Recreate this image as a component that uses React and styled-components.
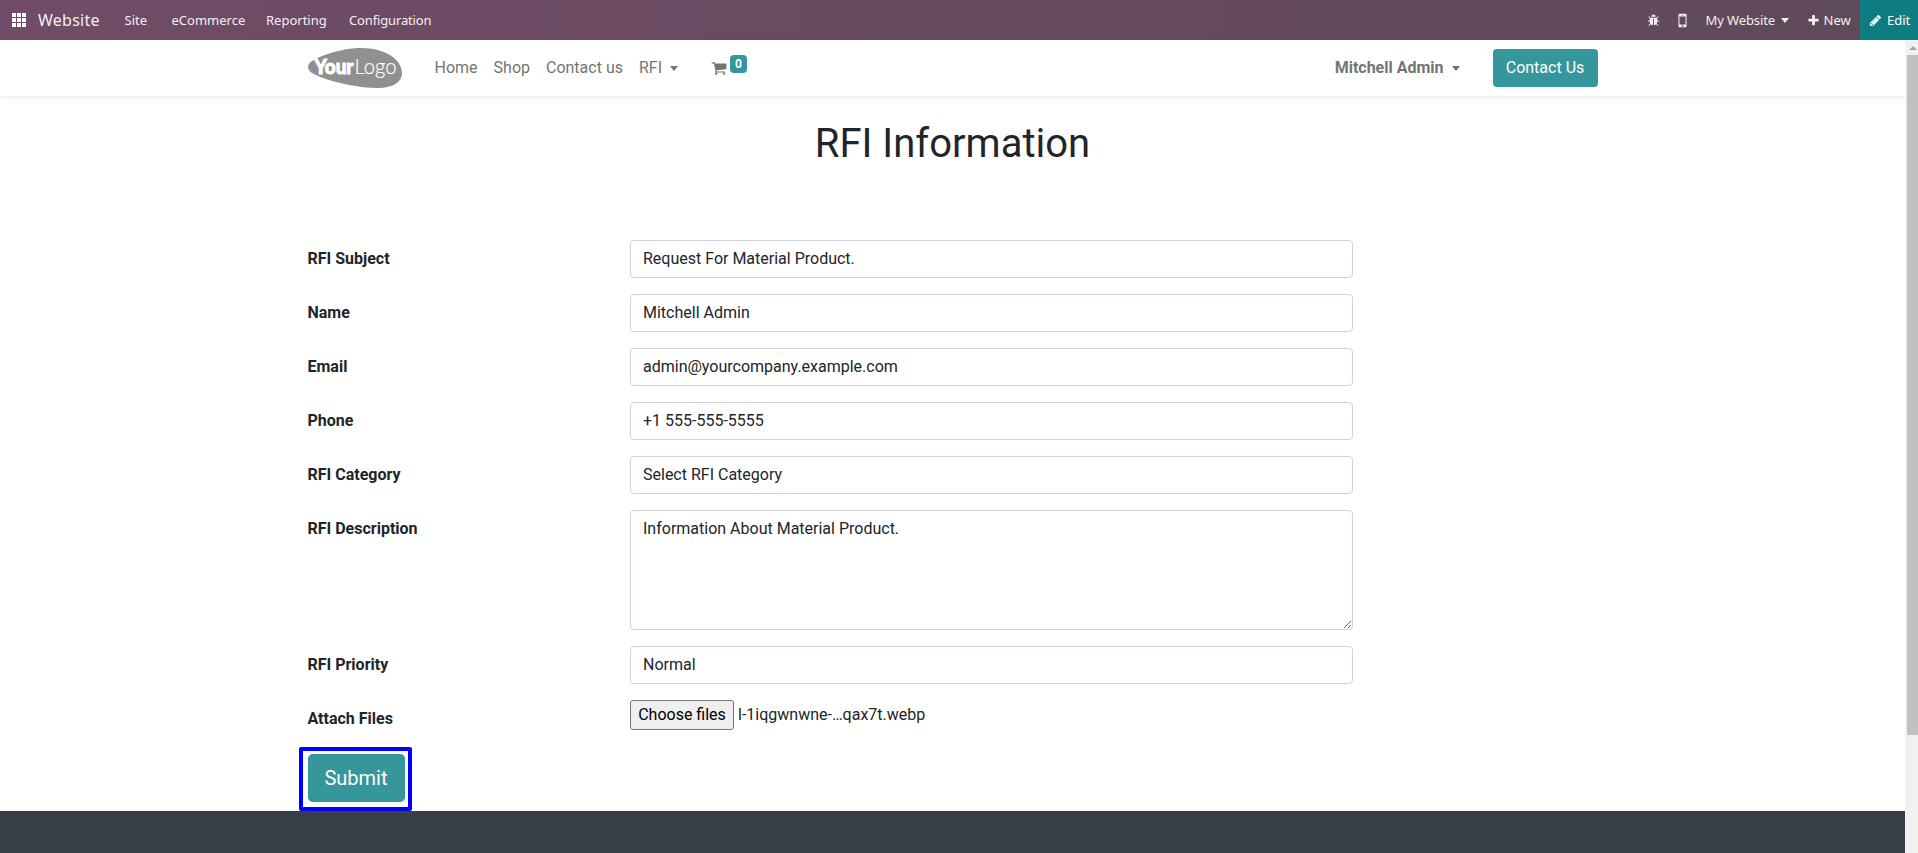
import React from "react";
import styled, { createGlobalStyle } from "styled-components";

const GlobalStyle = createGlobalStyle`
  *, *::before, *::after { box-sizing: border-box; }
  body {
    margin: 0;
    overflow: hidden;
    background: #fff;
    color: #212529;
    font: 400 16px/24px Roboto, "Liberation Sans", sans-serif;
  }
  input, textarea, button { font: inherit; color: inherit; margin: 0; }
`;

const Screen = styled.div`
  display: flex;
  flex-direction: column;
  width: 100%;
  height: 100vh;
  overflow: hidden;
`;

const SystemBar = styled.nav`
  display: flex;
  align-items: center;
  flex: 0 0 40px;
  padding-left: 12px;
  background: linear-gradient(90deg, #714b67 0%, #5f4a59 100%);
  color: #f3eff2;
  font: 400 13px/40px "Noto Sans", "Open Sans", sans-serif;
  white-space: nowrap;
`;

const AppsGrid = styled.span`
  display: grid;
  grid-template-columns: repeat(3, 4px);
  grid-auto-rows: 4px;
  gap: 1px;
  margin-right: 12px;
  i { background: #fff; }
`;

const SystemItem = styled.span`
  width: ${(p) => p.$w}px;
  margin-right: ${(p) => p.$gap ?? 0}px;
  font-size: ${(p) => p.$size ?? 13}px;
  letter-spacing: ${(p) => p.$track ?? 0}px;
`;

const SystemTools = styled.div`
  display: flex;
  align-items: center;
  height: 40px;
  margin-left: auto;
`;

const EditButton = styled.div`
  display: flex;
  align-items: center;
  width: 58px;
  height: 40px;
  padding-left: 9px;
  background: #0e7d82;
  color: #fff;
`;

const Glyph = styled.svg`
  flex: none;
  width: ${(p) => p.$size}px;
  height: ${(p) => p.$size}px;
  margin-right: ${(p) => p.$gap ?? 0}px;
  fill: currentColor;
`;

const Caret = styled.i`
  width: 0;
  height: 0;
  border: ${(p) => p.$size}px solid transparent;
  border-top: 5px solid currentColor;
  border-bottom: 0;
  margin: 0 ${(p) => p.$right ?? 0}px 0 ${(p) => p.$left}px;
`;

const Body = styled.div`
  display: flex;
  flex: 1;
  min-height: 0;
`;

const Page = styled.div`
  display: flex;
  flex-direction: column;
  flex: 1;
`;

const Header = styled.header`
  flex: 0 0 56px;
  padding: 0 307.5px;
  box-shadow: 0 2px 4px rgba(0, 0, 0, 0.075);
`;

const HeaderInner = styled.div`
  display: flex;
  align-items: center;
  height: 56px;
  color: #747474;
`;

const Logo = styled.svg`
  width: 95px;
  height: 40px;
  margin-right: 32px;
`;

const NavLink = styled.span`
  display: flex;
  align-items: center;
  margin-right: ${(p) => p.$gap ?? 16}px;
  font-weight: ${(p) => (p.$strong ? 700 : 400)};
`;

const CartLink = styled.span`
  display: flex;
  align-items: center;
  margin-left: 32px;
`;

const Badge = styled.span`
  width: 17px;
  height: 18px;
  margin: 0 0 9px 3px;
  border-radius: 4px;
  background: #35979c;
  color: #fff;
  font: 700 12px/18px Roboto, sans-serif;
  text-align: center;
`;

const Account = styled.div`
  display: flex;
  align-items: center;
  margin-left: auto;
`;

const Button = styled.button`
  display: block;
  flex: none;
  width: ${(p) => (p.$large ? 97 : 105)}px;
  height: ${(p) => (p.$large ? 48 : 38)}px;
  padding: 0;
  border: 0;
  border-radius: ${(p) => (p.$large ? 4.8 : 4)}px;
  background: #35979c;
  color: #fff;
  font-size: ${(p) => (p.$large ? 20 : 16)}px;
`;

const Content = styled.main`
  display: flex;
  flex-direction: column;
  flex: 0 0 714px;
  padding: 24px 307.5px 0;
`;

const Title = styled.h1`
  margin: 0 0 72px;
  font-size: 40px;
  font-weight: 400;
  line-height: 48px;
  text-align: center;
`;

const Field = styled.div`
  display: flex;
  align-items: flex-start;
  margin-bottom: 16px;
`;

const Label = styled.label`
  flex: 0 0 322.5px;
  padding-top: 7px;
  font-weight: 700;
`;

const Input = styled.input`
  width: 723px;
  height: 38px;
  padding: 5px 12px 7px;
  border: 1px solid #cdd2dc;
  border-radius: 4px;
  background: #fff;
  line-height: 24px;
`;

const TextArea = styled(Input)`
  display: block;
  height: 120px;
  padding: 6px 12px;
  resize: vertical;
`;

const FileRow = styled.div`
  display: flex;
  align-items: center;
  height: 30px;
  margin-bottom: 8px;
`;

const FileButton = styled.button`
  width: 104px;
  height: 30px;
  margin-right: 4px;
  padding: 0;
  border: 1px solid #767676;
  border-radius: 3px;
  background: #efefef;
  color: #000;
`;

const Highlight = styled.div`
  position: relative;
  z-index: 1;
  width: 113px;
  height: 64px;
  margin: -7px 0 0 -8.5px;
  padding: 3px 4.5px;
  border: 4px solid #0000ff;
  border-radius: 2px;
`;

const Footer = styled.footer`
  flex: 1;
  background: #383e45;
`;

const Scrollbar = styled.aside`
  display: flex;
  flex-direction: column;
  align-items: flex-end;
  flex: 0 0 13px;
  background: #f1f1f1;
  color: #a3a3a3;
`;

const ScrollArrow = styled.i`
  border: 4px solid transparent;
  border-bottom-color: currentColor;
  border-top: 0;
  margin: 6px 1px 5px 0;
`;

const ScrollThumb = styled.div`
  width: 11px;
  height: 680px;
  background: #c1c1c1;
`;

const icons = {
  cart: "M704 1536q0 52-38 90t-90 38-90-38-38-90 38-90 90-38 90 38 38 90zm896 0q0 52-38 90t-90 38-90-38-38-90 38-90 90-38 90 38 38 90zm128-1088v512q0 24-16.5 42.5t-40.5 21.5l-1044 122q13 60 13 70 0 16-24 64h920q26 0 45 19t19 45-19 45-45 19h-1024q-26 0-45-19t-19-45q0-11 8-31.5t16-36 21.5-40 15.5-29.5l-177-823h-204q-26 0-45-19t-19-45 19-45 45-19h256q16 0 28.5 6.5t19.5 15.5 13 24.5 8 26 5.5 29.5 4.5 26h1201q26 0 45 19t19 45z",
  pencil: "M491 1536l91-91-235-235-91 91v107h128v128h107zm523-928q0-22-22-22-10 0-17 7l-542 542q-7 7-7 17 0 22 22 22 10 0 17-7l542-542q7-7 7-17zm-54-192l416 416-832 832h-416v-416zm683 96q0 53-37 90l-166 166-416-416 166-165q36-38 90-38 53 0 91 38l235 234q37 39 37 91z",
  plus: "M1600 736v192q0 40-28 68t-68 28h-416v416q0 40-28 68t-68 28h-192q-40 0-68-28t-28-68v-416h-416q-40 0-68-28t-28-68v-192q0-40 28-68t68-28h416v-416q0-40 28-68t68-28h192q40 0 68 28t28 68v416h416q40 0 68 28t28 68z",
  mobile: "M976 1408q0-33-23.5-56.5t-56.5-23.5-56.5 23.5-23.5 56.5 23.5 56.5 56.5 23.5 56.5-23.5 23.5-56.5zm208-160v-704q0-13-9.5-22.5t-22.5-9.5h-512q-13 0-22.5 9.5t-9.5 22.5v704q0 13 9.5 22.5t22.5 9.5h512q13 0 22.5-9.5t9.5-22.5zm-192-848q0-16-16-16h-160q-16 0-16 16t16 16h160q16 0 16-16zm288-16v1024q0 52-38 90t-90 38h-512q-52 0-90-38t-38-90v-1024q0-52 38-90t90-38h512q52 0 90 38t38 90z",
  bug: "M1696 960q0 26-19 45t-45 19h-224q0 171-67 290l208 209q19 19 19 45t-19 45q-18 19-45 19t-45-19l-198-197q-5 5-15 13t-42 28.5-65 36.5-82 29-97 13v-896h-128v896q-51 0-101.5-13.5t-87-33-66-39-43.5-32.5l-15-14-183 207q-20 21-48 21-24 0-43-16-19-18-20.5-44.5t15.5-46.5l202-227q-58-114-58-274h-224q-26 0-45-19t-19-45 19-45 45-19h224v-294l-173-173q-19-19-19-45t19-45 45-19 45 19l173 173h844l173-173q19-19 45-19t45 19 19 45-19 45l-173 173v294h224q26 0 45 19t19 45zm-480-576h-640q0-133 93.5-226.5t226.5-93.5 226.5 93.5 93.5 226.5z",
};

const Icon = ({ name, size, gap }) => (
  <Glyph viewBox="0 0 1792 1792" $size={size} $gap={gap}>
    <path d={icons[name]} />
  </Glyph>
);

const BrandLogo = () => (
  <Logo viewBox="0 0 95 40">
    <path
      d="M0 19C0 14 6.500 11 15.500 7.500C28.500 2.500 41.500 0 53.500 0C76.500 0 94 11 94 25C94 35 83.500 40 69.500 40C51.500 40 27.500 35 12.500 29C4.500 26 0 23 0 19Z"
      fill="#909090"
    />
    <path d="M4.500 10.300h5v1.300h-2v1.300h-1v-1.300h-2z" fill="#fff" />
    <text x="6.500" y="25.500" fill="#fff" stroke="#fff" strokeWidth="1" fontFamily="Lato" fontWeight="900" fontSize="20.500" textLength="39" lengthAdjust="spacingAndGlyphs">Your</text>
    <text x="46.500" y="25.500" fill="#fff" stroke="#fff" strokeWidth=".2" fontFamily="Lato" fontWeight="300" fontSize="21.500" textLength="42" lengthAdjust="spacingAndGlyphs">Logo</text>
  </Logo>
);

const fieldsBefore = [
  ["RFI Subject", "Request For Material Product."],
  ["Name", "Mitchell Admin"],
  ["Email", "admin@yourcompany.example.com"],
  ["Phone", "+1 555-555-5555"],
  ["RFI Category", "Select RFI Category"],
];

const TextField = ({ label, value }) => (
  <Field>
    <Label>{label}</Label>
    <Input defaultValue={value} />
  </Field>
);

export default function App() {
  return (
    <Screen>
      <GlobalStyle />
      <SystemBar>
        <AppsGrid>{Array.from({ length: 9 }, (_, i) => <i key={i} />)}</AppsGrid>
        <SystemItem $w={63} $gap={23.5} $size={16} $track={0.25}>Website</SystemItem>
        <SystemItem $w={23} $gap={24}>Site</SystemItem>
        <SystemItem $w={71} $gap={23.5}>eCommerce</SystemItem>
        <SystemItem $w={60} $gap={23}>Reporting</SystemItem>
        <SystemItem $w={82} $track={-0.15}>Configuration</SystemItem>
        <SystemTools>
          <Icon name="bug" size={13} gap={13} />
          <Icon name="mobile" size={19} gap={13.5} />
          <SystemItem $w={70} $track={-0.1}>My Website</SystemItem>
          <Caret $size={4} $left={5} $right={18} />
          <Icon name="plus" size={13} gap={4} />
          <SystemItem $w={27} $gap={9.5}>New</SystemItem>
          <EditButton>
            <Icon name="pencil" size={13} gap={5} />
            <SystemItem $w={24}>Edit</SystemItem>
          </EditButton>
        </SystemTools>
      </SystemBar>
      <Body>
        <Page>
          <Header>
            <HeaderInner>
              <BrandLogo />
              <NavLink>Home</NavLink>
              <NavLink>Shop</NavLink>
              <NavLink>Contact us</NavLink>
              <NavLink $gap={1}>RFI<Caret $size={4.8} $left={8} /></NavLink>
              <CartLink>
                <Icon name="cart" size={16} />
                <Badge>0</Badge>
              </CartLink>
              <Account>
                <NavLink $strong $gap={33}>Mitchell Admin<Caret $size={4.8} $left={8} /></NavLink>
                <Button>Contact Us</Button>
              </Account>
            </HeaderInner>
          </Header>
          <Content>
            <Title>RFI Information</Title>
            {fieldsBefore.map(([label, value]) => (
              <TextField key={label} label={label} value={value} />
            ))}
            <Field>
              <Label>RFI Description</Label>
              <TextArea as="textarea" defaultValue="Information About Material Product." />
            </Field>
            <TextField label="RFI Priority" value="Normal" />
            <Field>
              <Label>Attach Files</Label>
              <FileRow>
                <FileButton>Choose files</FileButton>
                <span>l-1iqgwnwne-…qax7t.webp</span>
              </FileRow>
            </Field>
            <Highlight><Button $large>Submit</Button></Highlight>
          </Content>
          <Footer />
        </Page>
        <Scrollbar>
          <ScrollArrow />
          <ScrollThumb />
        </Scrollbar>
      </Body>
    </Screen>
  );
}
